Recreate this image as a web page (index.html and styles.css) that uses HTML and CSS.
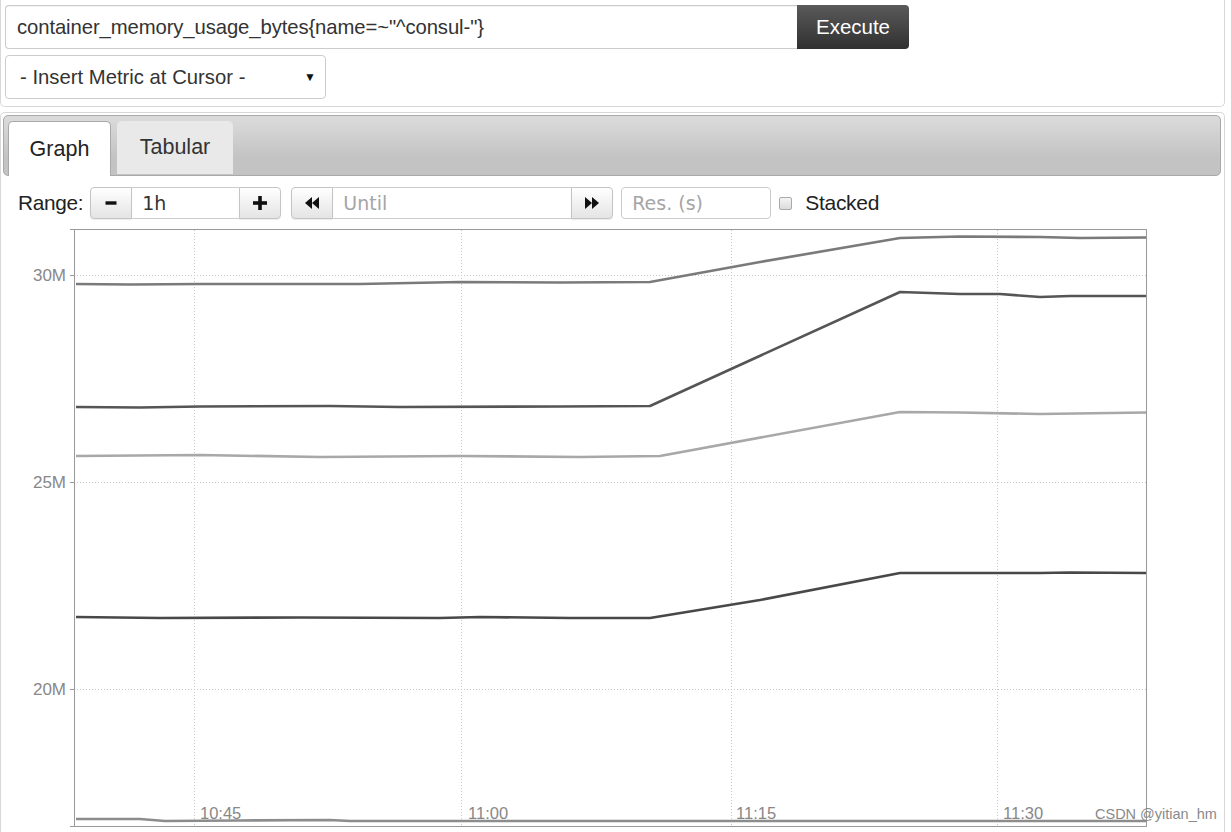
FILE: index.html
```html
<!DOCTYPE html>
<html lang="en">
<head>
    <meta charset="UTF-8">
    <title>Prometheus Graph</title>
    <link rel="stylesheet" href="styles.css">
</head>
<body>
    <div class="page">
        <!-- Expression panel -->
        <div class="query-panel">
            <div class="expr-row">
                <div class="expr-input">container_memory_usage_bytes{name=~"^consul-"}</div>
                <button class="execute-btn">Execute</button>
            </div>
            <div class="metric-select">
                <span>- Insert Metric at Cursor -</span>
                <span class="caret">&#9660;</span>
            </div>
        </div>

        <!-- Graph panel -->
        <div class="graph-panel">
            <div class="tab-bar">
                <div class="tab active">Graph</div>
                <div class="tab">Tabular</div>
            </div>

            <div class="range-row">
                <span class="range-label">Range:</span>
                <div class="btn-group">
                    <span class="btn">
                        <svg width="14" height="14" viewBox="0 0 14 14"><rect x="1.5" y="5.3" width="11" height="3.4" fill="#111"/></svg>
                    </span>
                    <span class="field range-field">1h</span>
                    <span class="btn">
                        <svg width="16" height="16" viewBox="0 0 16 16"><rect x="1" y="6.2" width="14" height="3.6" fill="#111"/><rect x="6.2" y="1" width="3.6" height="14" fill="#111"/></svg>
                    </span>
                </div>
                <div class="btn-group nav-group">
                    <span class="btn">
                        <svg width="16" height="14" viewBox="0 0 16 14"><polygon points="8,1 8,13 1,7" fill="#111"/><polygon points="15,1 15,13 8,7" fill="#111"/></svg>
                    </span>
                    <span class="field until-field placeholder">Until</span>
                    <span class="btn">
                        <svg width="16" height="14" viewBox="0 0 16 14"><polygon points="1,1 1,13 8,7" fill="#111"/><polygon points="8,1 8,13 15,7" fill="#111"/></svg>
                    </span>
                </div>
                <span class="field res-field placeholder">Res. (s)</span>
                <span class="checkbox"></span>
                <span class="stacked-label">Stacked</span>
            </div>

            <div class="chart">
                <svg width="1160" height="608" viewBox="1 224 1160 608">
                    <!-- grid -->
                    <g stroke="#c8c8c8" stroke-width="1" stroke-dasharray="1,2">
                        <line x1="74" y1="275.5" x2="1146" y2="275.5"/>
                        <line x1="74" y1="482.5" x2="1146" y2="482.5"/>
                        <line x1="74" y1="689.5" x2="1146" y2="689.5"/>
                        <line x1="194.5" y1="230" x2="194.5" y2="826"/>
                        <line x1="461.5" y1="230" x2="461.5" y2="826"/>
                        <line x1="731.5" y1="230" x2="731.5" y2="826"/>
                        <line x1="997.5" y1="230" x2="997.5" y2="826"/>
                    </g>
                    <!-- frame and ticks -->
                    <g stroke="#999" stroke-width="1" fill="none">
                        <rect x="74.5" y="229.5" width="1072" height="597"/>
                        <line x1="70" y1="229.5" x2="74" y2="229.5"/>
                        <line x1="70" y1="275.5" x2="74" y2="275.5"/>
                        <line x1="70" y1="482.5" x2="74" y2="482.5"/>
                        <line x1="70" y1="689.5" x2="74" y2="689.5"/>
                        <line x1="70" y1="826.5" x2="74" y2="826.5"/>
                    </g>
                    <!-- y labels -->
                    <g class="axis-text y-axis" text-anchor="end">
                        <text x="66" y="281">30M</text>
                        <text x="66" y="488">25M</text>
                        <text x="66" y="695">20M</text>
                    </g>
                    <!-- series -->
                    <g fill="none" stroke-width="2.6" stroke-linejoin="round">
                        <polyline stroke="#7a7a7a" points="76,284 130,284.5 200,284 360,284 460,282 560,282.5 650,282 760,262 900,238 960,236.5 1040,237 1080,238 1146,237.5"/>
                        <polyline stroke="#555" points="76,407 140,407.5 200,406.5 330,406 400,407 560,406.5 650,406 900,292 960,294 1000,294 1040,297 1070,296 1146,296"/>
                        <polyline stroke="#a8a8a8" points="76,456 200,455 320,457 460,456 580,457 660,456 900,412 960,412.5 1040,414 1146,412.5"/>
                        <polyline stroke="#484848" points="76,617 160,618 300,617.5 440,618 480,617 570,618 650,618 760,600 900,573 960,573 1040,573 1070,572.5 1146,573"/>
                        <polyline stroke="#8c8c8c" points="76,819 140,819 165,821 240,820.5 330,820 350,821 460,821 1146,821"/>
                    </g>
                    <!-- x labels -->
                    <g class="axis-text">
                        <text x="200" y="819">10:45</text>
                        <text x="468" y="819">11:00</text>
                        <text x="736" y="819">11:15</text>
                        <text x="1003" y="819">11:30</text>
                    </g>
                </svg>
            </div>
        </div>
        <div class="watermark">CSDN @yitian_hm</div>
    </div>
</body>
</html>
```

FILE: styles.css
```css
* {
    margin: 0;
    padding: 0;
    box-sizing: border-box;
}
body {
    font-family: "Liberation Sans", Arial, sans-serif;
    background-color: #fff;
    color: #222;
}
.page {
    width: 1225px;
    position: relative;
    height: 832px;
    overflow: hidden;
}

/* ============= Expression panel ============= */
.query-panel {
    height: 107px;
    border: 1px solid #d8d8d8;
    border-top: none;
    border-radius: 0 0 5px 5px;
    padding: 5px 4px;
}
.expr-row {
    display: flex;
    height: 44px;
}
.expr-input {
    width: 792px;
    height: 44px;
    border: 1px solid #ccc;
    border-right: none;
    border-radius: 4px 0 0 4px;
    padding: 0 11px;
    line-height: 42px;
    font-size: 20.3px;
    letter-spacing: -0.1px;
    color: #333;
    box-shadow: inset 0 1px 1px rgba(0, 0, 0, 0.06);
}
.execute-btn {
    width: 112px;
    height: 44px;
    border: none;
    border-radius: 0 4px 4px 0;
    background: linear-gradient(#5a5a5a, #303030);
    color: #fff;
    font-family: "Liberation Sans", Arial, sans-serif;
    font-size: 20.5px;
}
.metric-select {
    margin-top: 6px;
    width: 321px;
    height: 44px;
    border: 1px solid #ccc;
    border-radius: 4px;
    display: flex;
    justify-content: space-between;
    align-items: center;
    padding: 0 9px 0 14px;
    font-size: 20.3px;
    color: #333;
}
.metric-select .caret {
    font-size: 12px;
    color: #111;
}

/* ============= Graph panel ============= */
.graph-panel {
    margin-top: 5px;
    height: 730px;
    border: 1px solid #d8d8d8;
    border-bottom: none;
    border-radius: 5px 5px 0 0;
    padding: 2px 3px 0 2px;
}
.tab-bar {
    height: 61px;
    background: linear-gradient(#dcdcdc, #c3c3c3 70%);
    border: 1px solid #a9a9a9;
    border-radius: 5px;
    display: flex;
    align-items: flex-end;
    padding-left: 4px;
    gap: 6px;
}
.tab {
    height: 53px;
    width: 116px;
    justify-content: center;
    display: flex;
    align-items: center;
    font-size: 21.5px;
    color: #333;
    background: #e9e9e9;
    border-radius: 5px 5px 0 0;
    margin-bottom: 1px;
}
.tab.active {
    background: #fff;
    border: 1px solid #a9a9a9;
    border-bottom: none;
    height: 55px;
    margin-bottom: -1px;
    width: 103px;
    color: #222;
}

/* ============= Range controls ============= */
.range-row {
    display: flex;
    align-items: center;
    height: 34px;
    margin-top: 10px;
    padding-left: 15px;
}
.range-label {
    font-size: 20.8px;
    color: #222;
    margin-right: 7px;
    letter-spacing: -0.3px;
}
.btn-group {
    display: flex;
    height: 32px;
    margin-right: 10px;
}
.nav-group {
    margin-right: 8px;
}
.btn {
    width: 42px;
    height: 32px;
    display: flex;
    align-items: center;
    justify-content: center;
    background: linear-gradient(#fff, #e4e4e4);
    border: 1px solid #c4c4c4;
    box-shadow: 0 1px 1px rgba(0, 0, 0, 0.08);
}
.btn:first-child {
    border-radius: 4px 0 0 4px;
}
.btn:last-child {
    border-radius: 0 4px 4px 0;
}
.field {
    height: 32px;
    border: 1px solid #ccc;
    display: flex;
    align-items: center;
    padding-left: 10px;
    font-family: "DejaVu Sans", Verdana, sans-serif;
    font-size: 19px;
    color: #333;
    border-left: none;
    border-right: none;
}
.placeholder {
    color: #a5a5a5;
}
.range-field {
    width: 107px;
}
.until-field {
    width: 238px;
}
.res-field {
    width: 150px;
    border: 1px solid #ccc;
    border-radius: 4px;
}
.checkbox {
    width: 13px;
    height: 13px;
    border: 1px solid #aaa;
    border-radius: 2px;
    background: linear-gradient(#f4f4f4, #dcdcdc);
    margin-left: 8px;
    margin-right: 13px;
}
.stacked-label {
    font-size: 21px;
    color: #222;
    letter-spacing: -0.3px;
}

/* ============= Chart ============= */
.chart {
    margin-top: 4px;
    margin-left: -2px;
}
.chart svg {
    display: block;
}
.axis-text {
    font-family: "Liberation Sans", Arial, sans-serif;
    font-size: 16.5px;
    fill: #888;
}
.y-axis {
    font-size: 17px;
}
.watermark {
    position: absolute;
    left: 1095px;
    top: 806px;
    font-size: 14.5px;
    color: #8a8a8a;
}
```
